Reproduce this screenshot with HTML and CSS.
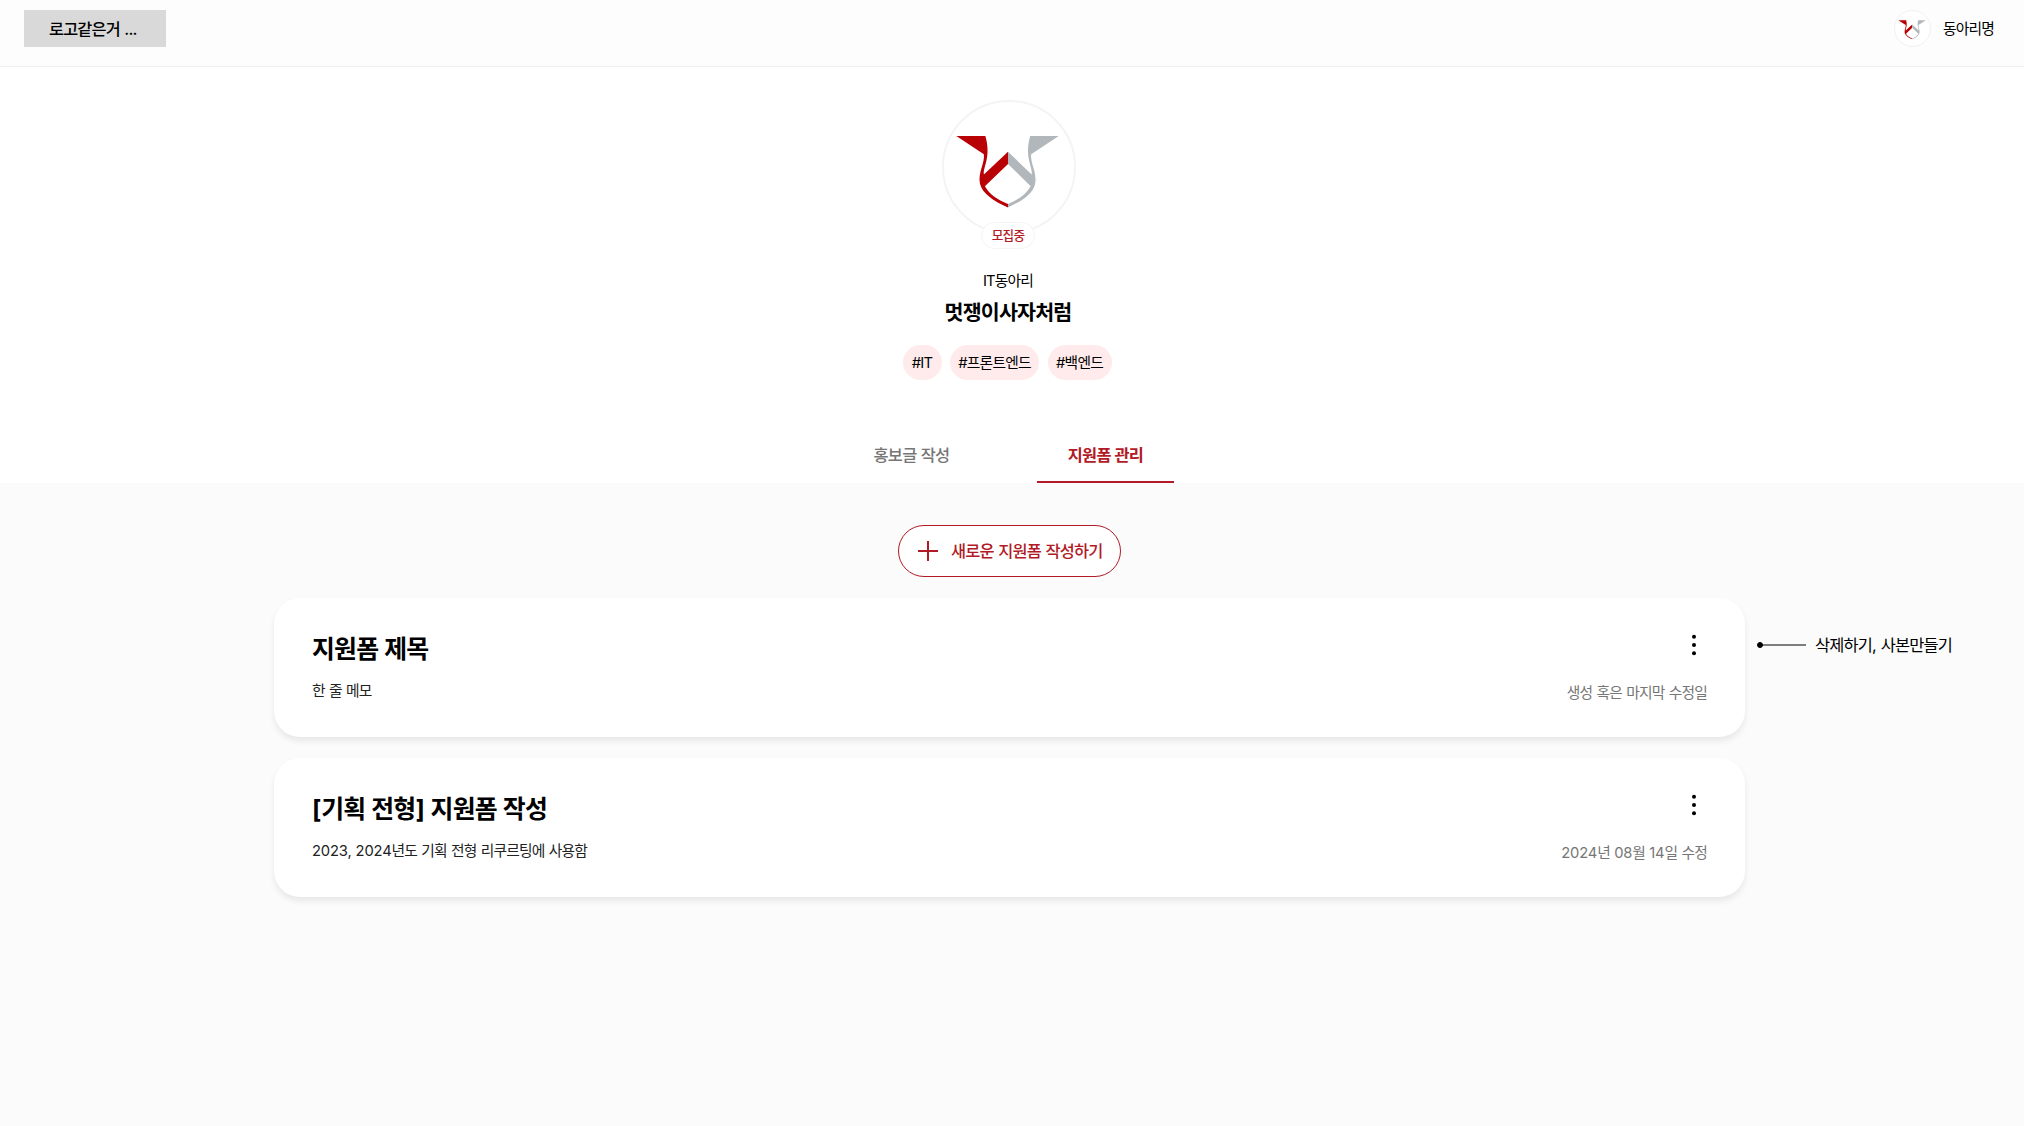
FILE: index.html
```html
<!DOCTYPE html>
<html lang="ko">
<head>
<meta charset="utf-8">
<title>지원폼 관리</title>
<link rel="stylesheet" href="styles.css">
</head>
<body>
<svg class="defs" aria-hidden="true">
  <symbol id="club-logo" viewBox="0 0 132 132">
    <path fill="#b90005" d="M12.500 34.500H42C44.500 43 45 52 43 60C41.300 67 40 70 40.500 73.500L65 50.500V63L41.500 85.500C46 93.500 54 99 65 103.500V107C50 100.500 39 93 36.500 83C34.300 71 41.500 63 40.500 53Z"/>
    <path fill="#b1b7ba" d="M116.500 34.500H87.500C85 43 84.500 52 86.500 60C88.200 67 89.500 70 89 73.500L65 50.500V63L88 85.500C83.500 93.500 76 99 65 103.500V107C79.500 100.500 90.500 93 92.500 83C94.700 71 87.500 63 88.500 53Z"/>
  </symbol>
  <symbol id="more" viewBox="0 0 24 24">
    <circle cx="12" cy="3.700" r="2"/><circle cx="12" cy="12" r="2"/><circle cx="12" cy="20.300" r="2"/>
  </symbol>
</svg>

<header class="topbar">
  <div class="brand">로고같은거 ...</div>
  <div class="account">
    <svg class="account-avatar"><use href="#club-logo"/></svg>
    <span class="account-name">동아리명</span>
  </div>
</header>

<section class="profile">
  <div class="profile-picture">
    <svg class="profile-logo"><use href="#club-logo"/></svg>
    <span class="status">모집중</span>
  </div>
  <p class="category">IT동아리</p>
  <h1 class="club-name">멋쟁이사자처럼</h1>
  <ul class="tags">
    <li class="tag tag-short">#IT</li>
    <li class="tag tag-long">#프론트엔드</li>
    <li class="tag tag-medium">#백엔드</li>
  </ul>
  <nav class="tabs">
    <a class="tab">홍보글 작성</a>
    <a class="tab tab-active">지원폼 관리</a>
  </nav>
</section>

<main class="forms">
  <button class="create">
    <svg class="plus" viewBox="0 0 20 20"><path d="M10 0V20M0 10H20"/></svg>
    <span>새로운 지원폼 작성하기</span>
  </button>
  <article class="card">
    <div class="card-text">
      <h2 class="card-title">지원폼 제목</h2>
      <p class="memo">한 줄 메모</p>
    </div>
    <div class="card-side">
      <svg class="more"><use href="#more"/></svg>
      <span class="date">생성 혹은 마지막 수정일</span>
    </div>
    <div class="note">
      <svg class="note-line" viewBox="0 0 50 8"><path d="M4 4H50"/><circle cx="4" cy="4" r="2.500"/></svg>
      <span>삭제하기, 사본만들기</span>
    </div>
  </article>
  <article class="card">
    <div class="card-text">
      <h2 class="card-title"><span class="num">[</span>기획 전형<span class="num">]</span> 지원폼 작성</h2>
      <p class="memo"><span class="num">2023, 2024</span>년도 기획 전형 리쿠르팅에 사용함</p>
    </div>
    <div class="card-side">
      <svg class="more"><use href="#more"/></svg>
      <span class="date"><span class="num">2024</span>년 <span class="num">08</span>월 <span class="num">14</span>일 수정</span>
    </div>
  </article>
</main>
</body>
</html>
```
FILE: styles.css
```css
* {
  box-sizing: border-box;
  margin: 0;
  padding: 0;
}

body {
  min-height: 1126px;
  background: #fbfbfb;
  color: #000;
  font-family: Inter, "Noto Sans CJK KR", sans-serif;
  font-size: 14.750px;
  line-height: 20px;
  letter-spacing: -0.055em;
  word-spacing: 0.060em;
  white-space: nowrap;
}

.defs {
  display: none;
}

.num {
  letter-spacing: -0.01em;
  word-spacing: 0;
}

.topbar {
  display: flex;
  justify-content: space-between;
  align-items: flex-start;
  height: 67px;
  padding: 10px 31px 0 24px;
  background: #fdfdfd;
  border-bottom: 1px solid #eee;
}

.brand {
  width: 142px;
  height: 37px;
  padding-left: 25px;
  background: #d9d9d9;
  font-size: 16.300px;
  font-weight: 500;
  line-height: 39px;
}

.account {
  display: flex;
  align-items: center;
  gap: 12px;
  height: 37px;
}

.account-avatar {
  width: 37px;
  height: 37px;
  background: #fff;
  border: 1px solid #f1f1f1;
  border-radius: 50%;
}

.account-name {
  width: 50px;
}

.profile {
  display: flex;
  flex-direction: column;
  align-items: center;
  height: 416px;
  padding: 33px 8px 0 0;
  background: #fff;
}

.profile-picture {
  display: flex;
  flex-direction: column;
  align-items: center;
  height: 149px;
}

.profile-logo {
  flex: none;
  width: 134px;
  height: 134px;
  margin-left: 1px;
  border: 2px solid #f4f4f4;
  border-radius: 50%;
}

.status {
  z-index: 1;
  width: 54px;
  height: 27px;
  margin-top: -12px;
  background: #fff;
  border: 1px solid #f4f4f4;
  border-radius: 14px;
  color: #b11a26;
  font-size: 12.600px;
  font-weight: 500;
  line-height: 25px;
  text-align: center;
}

.category {
  margin-top: 22px;
}

.club-name {
  margin-top: 7px;
  font-size: 20.600px;
  font-weight: 700;
  line-height: 30px;
}

.tags {
  display: flex;
  gap: 8.500px;
  margin: 17px 2px 0 0;
  list-style: none;
}

.tag {
  height: 35px;
  border-radius: 18px;
  background: #ffebeb;
  line-height: 36px;
  text-align: center;
}

.tag-short { width: 39px; }
.tag-long { width: 89px; }
.tag-medium { width: 64px; }

.tabs {
  display: flex;
  gap: 57px;
  margin: 46px 0 0 9px;
  padding-right: 8px;
}

.tab {
  width: 137px;
  height: 57px;
  color: #767676;
  font-size: 16.400px;
  font-weight: 500;
  line-height: 59px;
  text-align: center;
}

.tab-active {
  border-bottom: 2px solid #b11a26;
  color: #b11a26;
  font-weight: 700;
}

.forms {
  display: flex;
  flex-direction: column;
  align-items: center;
  gap: 21px;
  padding: 42px 5px 0 0;
}

.create {
  display: flex;
  align-items: center;
  gap: 13px;
  width: 223px;
  height: 52px;
  padding: 0 0 0 19px;
  background: #fff;
  border: 1px solid #b11a26;
  border-radius: 26px;
  color: #b11a26;
  font: inherit;
  font-size: 16.400px;
  font-weight: 500;
  letter-spacing: inherit;
  word-spacing: inherit;
}

.plus {
  width: 20px;
  height: 20px;
  fill: none;
  stroke: #b11a26;
  stroke-width: 2;
}

.card {
  position: relative;
  display: flex;
  justify-content: space-between;
  width: 1471px;
  height: 139px;
  padding: 32px 38px 0;
  background: #fff;
  border-radius: 26px;
  box-shadow: 0 4px 6px rgba(0, 0, 0, 0.080);
}

.card-title {
  font-size: 24.900px;
  font-weight: 700;
  line-height: 38px;
}

.memo {
  margin-top: 13px;
  color: #222;
}

.card-side {
  display: flex;
  flex-direction: column;
  align-items: flex-end;
  gap: 26px;
  padding-top: 3px;
}

.more {
  width: 24px;
  height: 24px;
  margin-right: 1px;
}

.date {
  color: #767676;
}

.note {
  position: absolute;
  top: 35px;
  left: 1482px;
  display: flex;
  align-items: center;
  gap: 9px;
  height: 24px;
  font-size: 16.400px;
}

.note-line {
  width: 50px;
  height: 8px;
  stroke: #000;
}
```
